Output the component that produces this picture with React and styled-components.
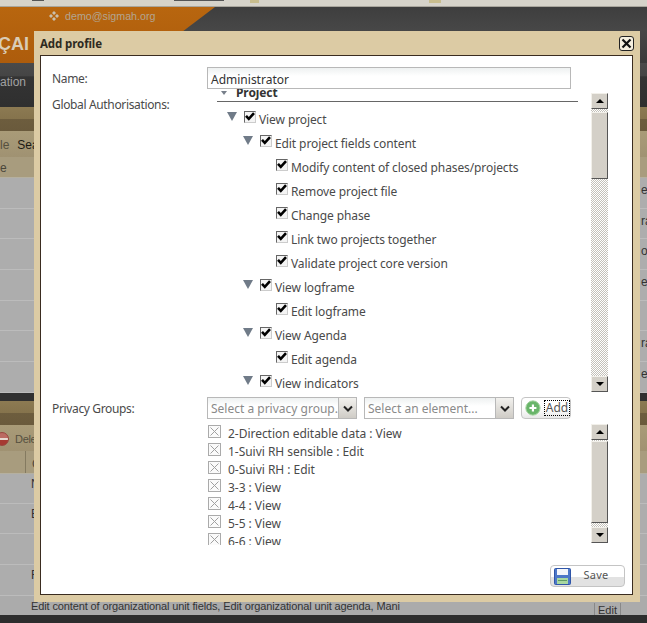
import React from 'react';
import styled, { createGlobalStyle } from 'styled-components';

const UI_FONT = '"Noto Sans", "DejaVu Sans", sans-serif';
const BACK_FONT = '"Liberation Sans", Arial, sans-serif';

const tree = [
    { level: 0, open: true, label: 'View project' },
    { level: 1, open: true, label: 'Edit project fields content' },
    { level: 2, label: 'Modify content of closed phases/projects' },
    { level: 2, label: 'Remove project file' },
    { level: 2, label: 'Change phase' },
    { level: 2, label: 'Link two projects together' },
    { level: 2, label: 'Validate project core version' },
    { level: 1, open: true, label: 'View logframe' },
    { level: 2, label: 'Edit logframe' },
    { level: 1, open: true, label: 'View Agenda' },
    { level: 2, label: 'Edit agenda' },
    { level: 1, open: true, label: 'View indicators' },
];

const privacyGroups = [
    '2-Direction editable data : View',
    '1-Suivi RH sensible : Edit',
    '0-Suivi RH : Edit',
    '3-3 : View',
    '4-4 : View',
    '5-5 : View',
    '6-6 : View',
];

const upperRows = ['ex', 'ra', 'on', 'ed', '', 'ra', 'ed'];
const lowerRows = [{ text: 'N', h: 30 }, { text: 'E', h: 30 }, { text: '', h: 31 }, { text: 'F', h: 31 }];

function ScrollBar({ thumbTop, thumbHeight, height }) {
    return (
        <S.ScrollBar $height={height}>
            <S.ScrollButton><S.ScrollArrow $up /></S.ScrollButton>
            <S.ScrollTrack>
                <S.Thumb $top={thumbTop} $height={thumbHeight} />
            </S.ScrollTrack>
            <S.ScrollButton><S.ScrollArrow /></S.ScrollButton>
        </S.ScrollBar>
    );
}

function SelectBox({ placeholder }) {
    return (
        <S.Select>
            <S.SelectText>{placeholder}</S.SelectText>
            <S.SelectButton>
                <svg width="10" height="7" viewBox="0 0 10 7">
                    <path d="M1 1.5 L5 5.5 L9 1.5" fill="none" stroke="#222" strokeWidth="2" />
                </svg>
            </S.SelectButton>
        </S.Select>
    );
}

export default function App() {
    return (
        <S.Page>
            <GlobalStyle />
            <S.TopStrip>
                <S.StripMark $left={32} $width={12} $dark />
                <S.StripMark $left={130} $width={50} $dark />
                <S.StripMark $left={26} $width={9} />
                <S.StripMark $left={170} $width={12} />
            </S.TopStrip>
            <S.Header>
                <S.UserMail>
                    <svg width="12" height="12" viewBox="0 0 12 12">
                        <path d="M6 1 L8 3 L6 5 L4 3 Z M3 4 L5 6 L3 8 L1 6 Z M9 4 L11 6 L9 8 L7 6 Z M6 7 L8 9 L6 11 L4 9 Z" fill="#c9bfae" />
                    </svg>
                    demo@sigmah.org
                </S.UserMail>
                <S.Brand>ÇAI</S.Brand>
            </S.Header>
            <S.Nav>ation</S.Nav>
            <S.Brown $height={24} />
            <S.Toolbar>
                <S.Faded>le</S.Faded>
                <S.Search>Sea</S.Search>
            </S.Toolbar>
            <S.HeadRow>e</S.HeadRow>
            {upperRows.map((text, i) => (
                <S.GreyRow key={i} $h={i === 6 ? 31 : 30.7} $indent={641} $pad={5}>{text}</S.GreyRow>
            ))}
            <S.DarkGap />
            <S.Brown $height={24} />
            <S.Toolbar>
                <S.DeleteIcon />
                <S.Faded $tight>Dele</S.Faded>
            </S.Toolbar>
            <S.HeadRow $tall>
                <S.HeadCell>C</S.HeadCell>
            </S.HeadRow>
            {lowerRows.map((row, i) => (
                <S.GreyRow key={i} $h={row.h} $indent={31} $pad={3}>{row.text}</S.GreyRow>
            ))}
            <S.LastRow>
                <S.LastText>Edit content of organizational unit fields, Edit organizational unit agenda, Mani</S.LastText>
                <S.EditCell>Edit</S.EditCell>
            </S.LastRow>

            <S.Dialog>
                <S.TitleBar>
                    <S.Title>Add profile</S.Title>
                    <S.CloseButton>
                        <svg width="11" height="11" viewBox="0 0 11 11">
                            <path d="M1.5 1.5 L9.5 9.5 M9.5 1.5 L1.5 9.5" stroke="#111" strokeWidth="2.2" />
                        </svg>
                    </S.CloseButton>
                </S.TitleBar>
                <S.Body>
                    <S.NameRow>
                        <S.Label>Name:</S.Label>
                        <S.NameInput>Administrator</S.NameInput>
                    </S.NameRow>
                    <S.TreeRow>
                        <S.TreeLabel>Global Authorisations:</S.TreeLabel>
                        <S.TreeViewport>
                            <S.TreeInner>
                                <S.SectionHead>
                                    <S.SectionArrow />
                                    Project
                                </S.SectionHead>
                                {tree.map((node) => (
                                    <S.TreeNode key={node.label} $level={node.level}>
                                        <S.NodeArrow $hidden={!node.open} />
                                        <S.CheckBox>
                                            <svg width="10" height="9" viewBox="0 0 10 9">
                                                <path d="M1 3.8 L3.8 6.8 L9 1.2" fill="none" stroke="#000" strokeWidth="2.6" />
                                            </svg>
                                        </S.CheckBox>
                                        <S.NodeText>{node.label}</S.NodeText>
                                    </S.TreeNode>
                                ))}
                            </S.TreeInner>
                        </S.TreeViewport>
                        <S.TreeBar>
                            <ScrollBar thumbTop={3} thumbHeight={67} height={299} />
                        </S.TreeBar>
                    </S.TreeRow>
                    <S.PrivacyRow>
                        <S.PrivacyLabel>Privacy Groups:</S.PrivacyLabel>
                        <S.PrivacyControls>
                            <SelectBox placeholder="Select a privacy group..." />
                            <SelectBox placeholder="Select an element..." />
                            <S.AddButton>
                                <svg width="16" height="16" viewBox="0 0 16 16">
                                    <circle cx="8" cy="8" r="7.2" fill="#69b56a" stroke="#a6d4a2" />
                                    <path d="M8 4.5 V11.5 M4.5 8 H11.5" stroke="#fff" strokeWidth="2.2" />
                                </svg>
                                <S.AddText>Add</S.AddText>
                            </S.AddButton>
                        </S.PrivacyControls>
                    </S.PrivacyRow>
                    <S.ListRow>
                        <S.ListViewport>
                            {privacyGroups.map((group) => (
                                <S.ListItem key={group}>
                                    <S.RemoveBox>
                                        <svg width="11" height="11" viewBox="0 0 11 11">
                                            <path d="M1.5 1.5 L9.5 9.5 M9.5 1.5 L1.5 9.5" stroke="#a0a0a0" strokeWidth="1" />
                                        </svg>
                                    </S.RemoveBox>
                                    {group}
                                </S.ListItem>
                            ))}
                        </S.ListViewport>
                        <ScrollBar thumbTop={1} thumbHeight={82} height={119} />
                    </S.ListRow>
                    <S.Footer>
                        <S.SaveButton>
                            <svg width="17" height="17" viewBox="0 0 17 17">
                                <rect x="0.5" y="0.5" width="16" height="16" rx="1" fill="#4d78c8" stroke="#2f55a8" />
                                <rect x="3" y="1" width="11" height="6" fill="#f4f6fb" />
                                <rect x="3" y="10" width="11" height="6" fill="#a8d8a0" />
                                <rect x="4" y="12" width="9" height="1" fill="#5f9c62" />
                            </svg>
                            <S.SaveText>Save</S.SaveText>
                        </S.SaveButton>
                    </S.Footer>
                </S.Body>
            </S.Dialog>
        </S.Page>
    );
}

const GlobalStyle = createGlobalStyle`
    html, body {
        margin: 0;
        padding: 0;
        background: #2d2d2d;
        overflow: hidden;
    }
`;

const S = {
    Page: styled.div`
        position: relative;
        width: 647px;
        height: 623px;
        overflow: hidden;
        font-family: ${BACK_FONT};
    `,
    TopStrip: styled.div`
        display: flex;
        height: 7px;
        background: #d6d3ca;
        border-bottom: 1px solid #a9a69d;
        box-sizing: border-box;
    `,
    StripMark: styled.span`
        height: ${p => (p.$dark ? 1 : 3)}px;
        width: ${p => p.$width}px;
        margin-left: ${p => p.$left}px;
        background: ${p => (p.$dark ? '#555' : '#c8bd8e')};
    `,
    Header: styled.div`
        position: relative;
        height: 56px;
        background: linear-gradient(#3e3e3e, #474747 40%, #3a3a3a);
        overflow: hidden;

        &::before {
            content: '';
            position: absolute;
            left: 0;
            top: 0;
            width: 215px;
            height: 100%;
            background: linear-gradient(#b8660f, #ad5c0c);
            clip-path: polygon(0 0, 100% 0, 141px 100%, 0 100%);
        }
    `,
    UserMail: styled.div`
        position: relative;
        display: flex;
        align-items: center;
        gap: 5px;
        padding: 2px 0 0 48px;
        height: 14px;
        font-size: 10.7px;
        color: #b3a591;
    `,
    Brand: styled.div`
        position: relative;
        margin: 11px 0 0 -2px;
        font-size: 18px;
        font-weight: bold;
        line-height: 20px;
        color: #d9ccb6;
    `,
    Nav: styled.div`
        height: 44px;
        padding-top: 12px;
        box-sizing: border-box;
        font-size: 12px;
        color: #a2a2a2;
        background: linear-gradient(#4a4a4a, #454545 30%, #343434 31%, #2f2f2f);
    `,
    Brown: styled.div`
        height: ${p => p.$height}px;
        background: linear-gradient(#8c7a52, #85734c 50%, #6d5d3e 51%, #6a5a3c);
    `,
    Toolbar: styled.div`
        display: flex;
        align-items: center;
        gap: 8px;
        height: 26px;
        padding-top: 1px;
        box-sizing: border-box;
        font-size: 12px;
        background: linear-gradient(#a99b78, #a09272);
    `,
    Faded: styled.span`
        color: #55503f;
        ${p => p.$tight && 'font-size: 11px; letter-spacing: -0.3px;'}
    `,
    Search: styled.span`
        color: #1c1a14;
    `,
    DeleteIcon: styled.span`
        width: 14px;
        height: 14px;
        margin-left: -5px;
        margin-right: -2px;
        box-sizing: border-box;
        border-radius: 50%;
        background: linear-gradient(#bb6a62 42%, #e8d8d0 43%, #e8d8d0 58%, #a63a32 59%);
        border: 1px solid #9a453e;
    `,
    HeadRow: styled.div`
        display: flex;
        align-items: center;
        height: ${p => (p.$tall ? 23 : 21)}px;
        padding-top: ${p => (p.$tall ? 0 : 2)}px;
        font-size: 12px;
        color: #4a463a;
        background: #a89c7e;
        border-bottom: 1px solid #b5b0a0;
        box-sizing: border-box;
    `,
    HeadCell: styled.span`
        margin-left: 25px;
        height: 100%;
        padding: 4px 0 0 6px;
        box-sizing: border-box;
        display: flex;
        align-items: center;
        border-left: 1px solid #847a60;
    `,
    GreyRow: styled.div`
        height: ${p => p.$h}px;
        padding: ${p => p.$pad}px 0 0 ${p => p.$indent}px;
        box-sizing: border-box;
        font-size: 12px;
        color: #333;
        white-space: nowrap;
        background: #adadad;
        border-bottom: 1px solid #bcbcbc;
    `,
    DarkGap: styled.div`
        height: 8px;
        background: #303030;
    `,
    LastRow: styled.div`
        display: flex;
        height: 19px;
        background: #ababab;
    `,
    LastText: styled.div`
        width: 369px;
        margin-left: 31px;
        padding-top: 4px;
        font-size: 11px;
        letter-spacing: -0.12px;
        color: #333;
        white-space: nowrap;
        overflow: hidden;
    `,
    EditCell: styled.div`
        margin: 7px 0 0 194px;
        width: 27px;
        height: 12px;
        box-sizing: border-box;
        text-align: center;
        font-size: 11px;
        line-height: 14px;
        color: #333;
        border-left: 1px solid #888;
        border-right: 1px solid #888;
    `,
    Dialog: styled.div`
        position: absolute;
        left: 34px;
        top: 31px;
        width: 606px;
        height: 571px;
        display: flex;
        flex-direction: column;
        box-sizing: border-box;
        padding: 0 7px 7px 6px;
        background: #dccba4;
        font-family: ${UI_FONT};
        font-size: 12px;
        letter-spacing: -0.1px;
        color: #4a4a4a;
    `,
    TitleBar: styled.div`
        display: flex;
        align-items: center;
        justify-content: space-between;
        height: 24px;
        flex: none;
    `,
    Title: styled.div`
        font-size: 11.5px;
        font-weight: bold;
        color: #2e2a20;
    `,
    CloseButton: styled.div`
        display: flex;
        align-items: center;
        justify-content: center;
        width: 15px;
        height: 15px;
        margin-right: -1px;
        box-sizing: border-box;
        border: 1px solid #222;
        border-radius: 3px;
        background: #f5efe0;
    `,
    Body: styled.div`
        flex: 1;
        display: flex;
        flex-direction: column;
        padding: 11px 7px 0 11px;
        background: #fff;
        border: 1px solid #3a2c20;
    `,
    NameRow: styled.div`
        display: flex;
        align-items: center;
        height: 22px;
    `,
    Label: styled.div`
        width: 155px;
        flex: none;
        letter-spacing: -0.35px;
    `,
    NameInput: styled.div`
        width: 364px;
        height: 22px;
        padding: 0 3px;
        box-sizing: border-box;
        line-height: 23px;
        font-size: 12px;
        letter-spacing: 0;
        color: #333;
        background: linear-gradient(#eef1f1, #fff 40%);
        border: 1px solid #b8b8b8;
    `,
    TreeRow: styled.div`
        display: flex;
        height: 303px;
    `,
    TreeLabel: styled.div`
        width: 155px;
        flex: none;
        padding-top: 7px;
        letter-spacing: -0.35px;
    `,
    TreeViewport: styled.div`
        width: 384px;
        height: 303px;
        overflow: hidden;
    `,
    TreeInner: styled.div`
        margin-top: -4px;
    `,
    SectionHead: styled.div`
        position: relative;
        display: flex;
        align-items: flex-end;
        box-sizing: border-box;
        width: 361px;
        height: 17px;
        margin: 0 0 5px 10px;
        padding: 0 0 1px 19px;
        border-bottom: 1px solid #666;
        font-weight: bold;
        color: #333;
        line-height: 15px;
    `,
    SectionArrow: styled.span`
        position: absolute;
        left: 4px;
        top: 6px;
        border-left: 3px solid transparent;
        border-right: 3px solid transparent;
        border-top: 4px solid #777f8a;
    `,
    TreeNode: styled.div`
        display: flex;
        align-items: center;
        height: 24px;
        padding-left: ${p => 20 + p.$level * 16}px;
    `,
    NodeArrow: styled.span`
        flex: none;
        width: 0;
        height: 0;
        margin: -6px 8px 0 0;
        border-left: 5px solid transparent;
        border-right: 5px solid transparent;
        border-top: 9px solid ${p => (p.$hidden ? 'transparent' : '#707b88')};
    `,
    CheckBox: styled.span`
        flex: none;
        display: flex;
        align-items: center;
        justify-content: center;
        width: 12px;
        height: 12px;
        margin: -5px 3px 0 -1px;
        box-sizing: border-box;
        background: #f4f4f4;
        border: 1px solid;
        border-color: #666 #ccc #ccc #666;
    `,
    NodeText: styled.span`
        white-space: nowrap;
    `,
    TreeBar: styled.div`
        flex: none;
        padding-top: 4px;
    `,
    ScrollBar: styled.div`
        display: flex;
        flex-direction: column;
        width: 17px;
        height: ${p => p.$height}px;
    `,
    ScrollButton: styled.div`
        flex: none;
        display: flex;
        align-items: center;
        justify-content: center;
        height: 16px;
        box-sizing: border-box;
        background: #d4d0c8;
        border: 1px solid;
        border-color: #f2f0ea #555 #555 #f2f0ea;
    `,
    ScrollArrow: styled.span`
        width: 0;
        height: 0;
        border-left: 4px solid transparent;
        border-right: 4px solid transparent;
        ${p => (p.$up ? 'border-bottom: 4px solid #000;' : 'border-top: 4px solid #000;')}
    `,
    ScrollTrack: styled.div`
        flex: 1;
        position: relative;
        background: repeating-conic-gradient(#c4c1b9 0 25%, #fff 0 50%) 0 0 / 2px 2px;
    `,
    Thumb: styled.div`
        position: absolute;
        left: 0;
        right: 0;
        top: ${p => p.$top}px;
        height: ${p => p.$height}px;
        box-sizing: border-box;
        background: #d4d0c8;
        border: 1px solid;
        border-color: #f2f0ea #555 #555 #f2f0ea;
    `,
    PrivacyRow: styled.div`
        display: flex;
        margin-top: 5px;
        height: 23px;
    `,
    PrivacyLabel: styled.div`
        width: 155px;
        flex: none;
        line-height: 24px;
        letter-spacing: -0.35px;
    `,
    PrivacyControls: styled.div`
        display: flex;
        gap: 7px;
    `,
    Select: styled.div`
        display: flex;
        width: 150px;
        height: 22px;
        box-sizing: border-box;
        background: linear-gradient(#eef1f1, #fff 40%);
        border: 1px solid #b8b8b8;
        overflow: hidden;
    `,
    SelectText: styled.div`
        flex: 1;
        min-width: 0;
        padding-left: 3px;
        line-height: 22px;
        letter-spacing: 0;
        color: #8a8a8a;
        white-space: nowrap;
        overflow: hidden;
    `,
    SelectButton: styled.div`
        flex: none;
        display: flex;
        align-items: center;
        justify-content: center;
        width: 17px;
        background: linear-gradient(#f2f1ee, #cfccc6);
        border-left: 1px solid #b8b8b8;
    `,
    AddButton: styled.div`
        display: flex;
        align-items: center;
        gap: 3px;
        width: 50px;
        height: 22px;
        padding-left: 3px;
        box-sizing: border-box;
        background: linear-gradient(#fff 50%, #e8e8e8);
        border: 1px solid #c4c4c4;
        border-radius: 4px;
    `,
    AddText: styled.span`
        padding: 0 1px;
        line-height: 14px;
        color: #555;
        border: 1px dotted #000;
    `,
    ListRow: styled.div`
        display: flex;
        margin-top: 4px;
        height: 119px;
        margin-left: 155px;
    `,
    ListViewport: styled.div`
        width: 384px;
        height: 121px;
        overflow: hidden;
        letter-spacing: -0.03px;
    `,
    ListItem: styled.div`
        display: flex;
        align-items: center;
        gap: 7px;
        height: 18px;
        padding-left: 1px;
        white-space: nowrap;
    `,
    RemoveBox: styled.span`
        display: flex;
        align-items: center;
        justify-content: center;
        width: 13px;
        height: 13px;
        margin-top: -3px;
        box-sizing: border-box;
        border: 1px solid #aaa;
        background: #fafafa;
    `,
    Footer: styled.div`
        display: flex;
        justify-content: flex-end;
        margin-top: 22px;
    `,
    SaveButton: styled.div`
        display: flex;
        align-items: center;
        width: 75px;
        height: 22px;
        padding-left: 3px;
        box-sizing: border-box;
        background: linear-gradient(#fff 55%, #e2e2e2 56%);
        border: 1px solid #c4c4c4;
        border-radius: 4px;
    `,
    SaveText: styled.span`
        flex: 1;
        text-align: center;
        padding: 0 3px 3px 0;
        font-size: 11px;
        letter-spacing: 0.2px;
        color: #555;
    `,
};
